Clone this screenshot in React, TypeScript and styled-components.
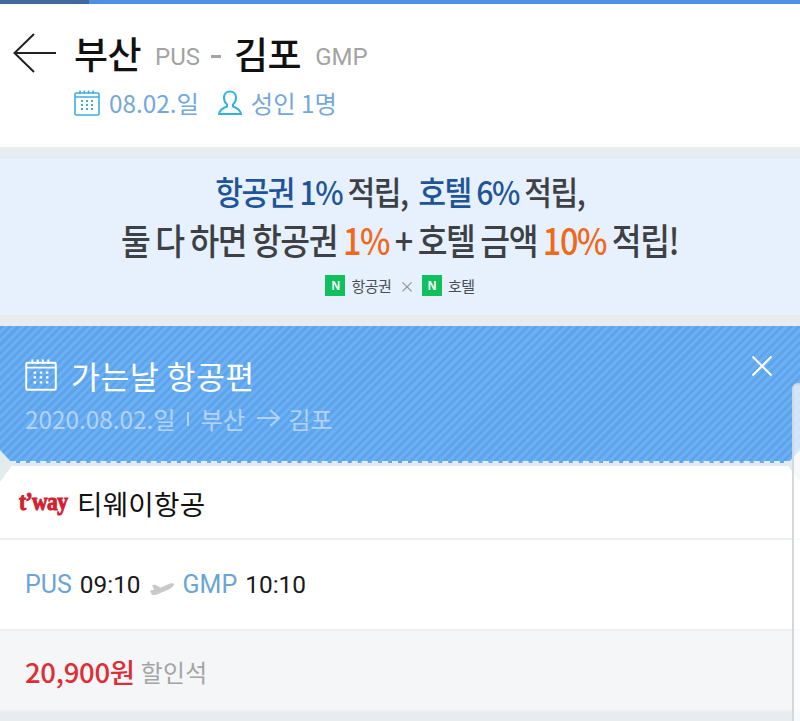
import styled, { createGlobalStyle } from "styled-components";

const GlobalStyle = createGlobalStyle`
  html, body {
    margin: 0;
    padding: 0;
    height: 721px;
    overflow: hidden;
    background: #e8ecef;
    font-family: "Noto Sans CJK KR", "Noto Sans", sans-serif;
  }
  * { box-sizing: border-box; }
`;

const Page = styled.div`
  position: relative;
  width: 800px;
  height: 721px;
  overflow: hidden;
  display: flex;
  flex-direction: column;
`;

const TopBar = styled.div`
  height: 4px;
  background: #4f90e2;
  flex: none;
`;

const TopBarDark = styled.div`
  width: 89px;
  height: 100%;
  background: #41699f;
`;

const Header = styled.header`
  height: 143px;
  flex: none;
  background: #fff;
  padding: 23px 0 0 13px;
`;

const RouteRow = styled.div`
  display: flex;
  align-items: center;
  height: 52px;
`;

const BackButton = styled.svg`
  width: 44px;
  height: 40px;
  margin-right: 17px;
  flex: none;
`;

const City = styled.span`
  font-size: 37px;
  font-weight: 500;
  line-height: 52px;
  color: #111;
  letter-spacing: -0.5px;
`;

const Code = styled.span`
  font-family: Roboto, sans-serif;
  font-size: 24px;
  color: #a3a3a3;
  margin: 7px 0 0 14px;
`;

const Dash = styled.span`
  width: 10px;
  height: 3px;
  background: #a3a3a3;
  margin: 6px 13px 0 11px;
`;

const InfoRow = styled.div`
  display: flex;
  align-items: center;
  height: 36px;
  margin: 6px 0 0 61px;
`;

const InfoText = styled.span<{ $gap?: number }>`
  font-size: 24.3px;
  line-height: 36px;
  color: #74a8d8;
  margin-left: 9px;
  margin-right: ${(p) => p.$gap ?? 0}px;
`;

const Divider = styled.div<{ $h: number }>`
  height: ${(p) => p.$h}px;
  flex: none;
  background: #e8ecef;
`;

const Banner = styled.section`
  height: 158px;
  flex: none;
  background: #e6f1fd;
  border-top: 1px solid #e0e6ea;
  display: flex;
  flex-direction: column;
  align-items: center;
  padding-top: 9px;
`;

const BannerLine = styled.div<{ $size: number; $squeeze: number }>`
  font-size: ${(p) => p.$size}px;
  font-weight: 500;
  line-height: 48px;
  letter-spacing: -1.6px;
  color: #3d4145;
  white-space: pre;
  transform: scaleX(${(p) => p.$squeeze});
`;

const Accent = styled.span<{ $color: string }>`
  color: ${(p) => p.$color};
`;

const PartnerRow = styled.div`
  display: flex;
  align-items: center;
  margin-top: 12px;
  font-size: 15px;
  letter-spacing: -0.5px;
  color: #4a4e52;
`;

const NaverBadge = styled.span`
  width: 20px;
  height: 21px;
  background: #0fc05c;
  color: #fff;
  font-family: "Liberation Sans", sans-serif;
  font-size: 12px;
  font-weight: 700;
  display: flex;
  align-items: center;
  justify-content: center;
  margin-right: 6px;
`;

const Times = styled.span`
  color: #8b8f93;
  margin: 0 8px;
`;

const TicketHead = styled.section`
  position: relative;
  height: 137px;
  flex: none;
  padding: 24px 25px 0;
  background: repeating-linear-gradient(
    135deg,
    #5da4ee 0 3px,
    #6db0f2 3px 6px
  );
  border-bottom: 2px dashed #dfeefc;
`;

const TicketTitleRow = styled.div`
  display: flex;
  align-items: center;
  height: 50px;
`;

const TicketTitle = styled.h2`
  margin: 0 0 0 14px;
  font-size: 31.5px;
  font-weight: 400;
  color: #fff;
  letter-spacing: 0.4px;
`;

const TicketSub = styled.div`
  display: flex;
  align-items: center;
  height: 36px;
  font-size: 24.3px;
  color: #b3d3f6;
`;

const SubSep = styled.span`
  width: 2px;
  height: 14px;
  background: #b3d3f6;
  margin: 2px 12px 0 11px;
`;

const SubArrow = styled.svg`
  width: 25px;
  height: 20px;
  margin: 0 7px 0 11px;
`;

const CloseButton = styled.svg`
  position: absolute;
  top: 29px;
  right: 27px;
  width: 22px;
  height: 22px;
`;

const Notch = styled.svg<{ $side: "left" | "right" }>`
  position: absolute;
  top: 450px;
  ${(p) => p.$side}: 0;
  width: 14px;
  height: 32px;
`;

const Gap = styled.div`
  height: 3px;
  flex: none;
  background: #e3e9ee;
`;

const CardRow = styled.div<{ $h: number; $bg?: string }>`
  height: ${(p) => p.$h}px;
  flex: none;
  display: flex;
  align-items: center;
  background: ${(p) => p.$bg ?? "#fff"};
  padding-left: 25px;
  border-bottom: 2px solid #eceef0;
`;

const AirlineLogo = styled.span`
  font-family: "Liberation Serif", serif;
  font-size: 21.5px;
  font-weight: 700;
  color: #d2202f;
  margin-left: -6px;
  width: 58px;
  letter-spacing: -0.6px;
  transform: scaleY(1.15);
  -webkit-text-stroke: 0.9px #d2202f;
`;

const AirlineName = styled.span`
  font-size: 27.7px;
  line-height: 40px;
  padding-top: 2px;
  color: #111;
  letter-spacing: 0.2px;
`;

const Airport = styled.span`
  font-family: Roboto, sans-serif;
  font-size: 25px;
  color: #6aa5d8;
  margin-right: 8px;
`;

const Time = styled.span`
  font-family: Roboto, sans-serif;
  font-size: 24.4px;
  color: #1a1a1a;
`;

const PlaneIcon = styled.svg`
  width: 24px;
  height: 16px;
  margin: 4px 9px 0;
`;

const Price = styled.span`
  font-size: 27.5px;
  font-weight: 500;
  color: #dc2e35;
  letter-spacing: -0.3px;
`;

const SeatClass = styled.span`
  font-size: 23.8px;
  color: #a4a4a4;
  margin: 2px 0 0 6px;
  letter-spacing: 0.3px;
`;

const ScrollEdge = styled.div`
  position: absolute;
  top: 383px;
  left: 792px;
  width: 12px;
  height: 360px;
  border: 2px solid #d4d8dc;
  border-radius: 8px;
  background: rgba(255, 255, 255, 0.7);
`;

const CalendarIcon = ({ color, size }: { color: string; size: number }) => (
  <svg width={size} height={size} viewBox="0 0 26 26" fill="none" stroke={color} strokeWidth="1.6">
    <rect x="1" y="3" width="24" height="22" rx="1" />
    <path d="M1 7h24M6 0.5V4M10.3 0.5V4M14.6 0.5V4M19 0.5V4" />
    <path d="M7 11h2M12 11h2M17 11h2M7 15h2M12 15h2M17 15h2M7 19h2M12 19h2M17 19h2" strokeWidth="1.8" />
  </svg>
);

const App = () => {
  return (
    <>
      <GlobalStyle />
      <Page>
        <TopBar>
          <TopBarDark />
        </TopBar>
        <Header>
          <RouteRow>
            <BackButton viewBox="0 0 44 40" fill="none" stroke="#222" strokeWidth="2">
              <path d="M43 20H1.500M21 1L1.500 20 21 39" />
            </BackButton>
            <City>부산</City>
            <Code>PUS</Code>
            <Dash />
            <City>김포</City>
            <Code>GMP</Code>
          </RouteRow>
          <InfoRow>
            <CalendarIcon color="#3fb0dc" size={26} />
            <InfoText $gap={19}>08.02.일</InfoText>
            <svg width="24" height="26" viewBox="0 0 24 26" fill="none" stroke="#2fb4e0" strokeWidth="2">
              <path d="M12 1.500c-3.600 0-6 2.700-6 6.300 0 3 1.200 5.200 3 6.700v2c-3 1-7 2.500-8 7.500h22c-1-5-5-6.500-8-7.500v-2c1.800-1.500 3-3.700 3-6.700 0-3.600-2.400-6.300-6-6.300z" />
            </svg>
            <InfoText>성인 1명</InfoText>
          </InfoRow>
        </Header>
        <Divider $h={10} />
        <Banner>
          <BannerLine $size={33} $squeeze={0.915}>
            <Accent $color="#1f5499">항공권 1%</Accent> 적립,{"  "}
            <Accent $color="#1f5499">호텔 6%</Accent> 적립,
          </BannerLine>
          <BannerLine $size={36} $squeeze={0.9}>
            둘 다 하면 항공권 <Accent $color="#f0691a">1%</Accent> + 호텔 금액{" "}
            <Accent $color="#f0691a">10%</Accent> 적립!
          </BannerLine>
          <PartnerRow>
            <NaverBadge>N</NaverBadge>
            항공권
            <Times>×</Times>
            <NaverBadge>N</NaverBadge>
            호텔
          </PartnerRow>
        </Banner>
        <Divider $h={11} />
        <TicketHead>
          <TicketTitleRow>
            <CalendarIcon color="#ffffff" size={32} />
            <TicketTitle>가는날 항공편</TicketTitle>
          </TicketTitleRow>
          <TicketSub>
            2020.08.02.일
            <SubSep />
            부산
            <SubArrow viewBox="0 0 26 20" fill="none" stroke="#b3d3f6" strokeWidth="2">
              <path d="M1 10h23M15 2l9 8-9 8" />
            </SubArrow>
            김포
          </TicketSub>
          <CloseButton viewBox="0 0 22 22" fill="none" stroke="#fff" strokeWidth="2">
            <path d="M1.500 1.500l19 19M20.500 1.500l-19 19" />
          </CloseButton>
        </TicketHead>
        <Gap />
        <CardRow $h={74}>
          <AirlineLogo>t’way</AirlineLogo>
          <AirlineName>티웨이항공</AirlineName>
        </CardRow>
        <CardRow $h={91}>
          <Airport>PUS</Airport>
          <Time>09:10</Time>
          <PlaneIcon viewBox="0 0 24 16" fill="#c9c9c9" stroke="#c9c9c9" strokeWidth="0.8" strokeLinejoin="round">
            <path d="M0.500 12l4-1.500L2.500 6.500l2.500-.5 5.500 3 7-3c2-1 5.500-2 6-1s-1 3-3.500 4.500L6 15.500H2z" />
          </PlaneIcon>
          <Airport>GMP</Airport>
          <Time>10:10</Time>
        </CardRow>
        <CardRow $h={81} $bg="#f5f6f8">
          <Price>20,900원</Price>
          <SeatClass>할인석</SeatClass>
        </CardRow>
        <Notch $side="left" viewBox="0 0 14 32">
          <path d="M0 0l13 14L0 32z" fill="#e2ecee" />
        </Notch>
        <Notch $side="right" viewBox="0 0 14 32">
          <path d="M14 0L1 14l13 18z" fill="#e2ecee" />
        </Notch>
        <ScrollEdge />
      </Page>
    </>
  );
};

export default App;
